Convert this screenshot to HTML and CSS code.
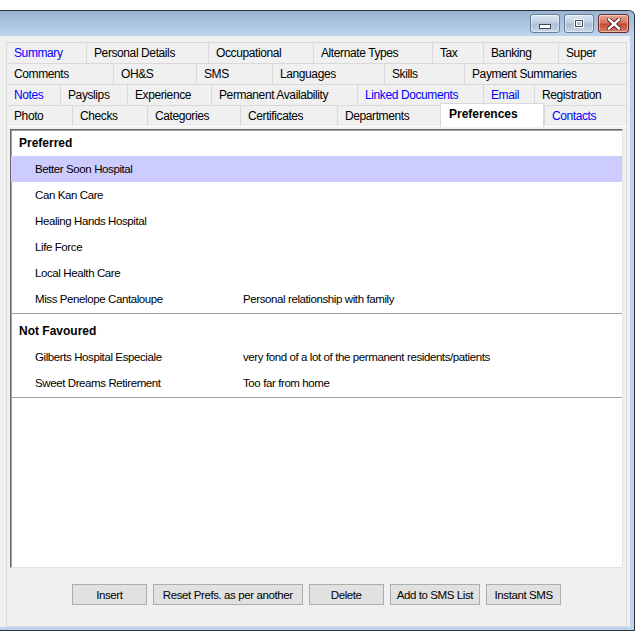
FILE: index.html
```html
<!DOCTYPE html>
<html lang="en">
<head>
  <meta charset="UTF-8" />
  <title>Preferences</title>
  <link rel="stylesheet" href="styles.css">
</head>
<body>
  <div class="window">
    <div class="titlebar">
      <button class="cap-btn" title="Minimize"><span class="ico-min"></span></button>
      <button class="cap-btn" title="Restore"><span class="ico-restore"></span></button>
      <button class="cap-btn close" title="Close">
        <svg width="14" height="12" viewBox="0 0 14 12">
          <path d="M2 1.5 L12 10.5 M12 1.5 L2 10.5" stroke="#4a1a14" stroke-width="4.2" stroke-linecap="square" fill="none"/>
          <path d="M2 1.5 L12 10.5 M12 1.5 L2 10.5" stroke="#fff" stroke-width="2.4" stroke-linecap="square" fill="none"/>
        </svg>
      </button>
    </div>

    <div class="client">
      <div class="tabs">
        <div class="tab-row row-1">
          <div class="tab link">Summary</div>
          <div class="tab">Personal Details</div>
          <div class="tab">Occupational</div>
          <div class="tab">Alternate Types</div>
          <div class="tab">Tax</div>
          <div class="tab">Banking</div>
          <div class="tab">Super</div>
        </div>
        <div class="tab-row row-2">
          <div class="tab">Comments</div>
          <div class="tab">OH&amp;S</div>
          <div class="tab">SMS</div>
          <div class="tab">Languages</div>
          <div class="tab">Skills</div>
          <div class="tab">Payment Summaries</div>
        </div>
        <div class="tab-row row-3">
          <div class="tab link">Notes</div>
          <div class="tab">Payslips</div>
          <div class="tab">Experience</div>
          <div class="tab">Permanent Availability</div>
          <div class="tab link">Linked Documents</div>
          <div class="tab link">Email</div>
          <div class="tab">Registration</div>
        </div>
        <div class="tab-row row-4">
          <div class="tab">Photo</div>
          <div class="tab">Checks</div>
          <div class="tab">Categories</div>
          <div class="tab">Certificates</div>
          <div class="tab">Departments</div>
          <div class="tab active">Preferences</div>
          <div class="tab link">Contacts</div>
        </div>
      </div>

      <div class="page">
        <div class="list">
          <div class="section">
            <div class="group">Preferred</div>
            <div class="item selected"><span class="name">Better Soon Hospital</span><span class="note"></span></div>
            <div class="item"><span class="name">Can Kan Care</span><span class="note"></span></div>
            <div class="item"><span class="name">Healing Hands Hospital</span><span class="note"></span></div>
            <div class="item"><span class="name">Life Force</span><span class="note"></span></div>
            <div class="item"><span class="name">Local Health Care</span><span class="note"></span></div>
            <div class="item"><span class="name">Miss Penelope Cantaloupe</span><span class="note">Personal relationship with family</span></div>
          </div>
          <div class="section">
            <div class="group">Not Favoured</div>
            <div class="item"><span class="name">Gilberts Hospital Especiale</span><span class="note">very fond of a lot of the permanent residents/patients</span></div>
            <div class="item"><span class="name">Sweet Dreams Retirement</span><span class="note">Too far from home</span></div>
          </div>
        </div>

        <div class="actions">
          <button class="btn">Insert</button>
          <button class="btn wide">Reset Prefs. as per another</button>
          <button class="btn">Delete</button>
          <button class="btn">Add to SMS List</button>
          <button class="btn">Instant SMS</button>
        </div>
      </div>
    </div>
  </div>
</body>
</html>
```

FILE: styles.css
```css
html, body {
  margin: 0;
  padding: 0;
  background: #fff;
  font-family: 'Liberation Sans', Arial, sans-serif;
  font-size: 12px;
  color: #000;
}
.window {
  margin-top: 10px;
  width: 634px;
  height: 619px;
  border: 1px solid #2e3236;
  border-left: none;
  border-top-right-radius: 6px;
  background: #bcd3eb;
  display: flex;
  flex-direction: column;
}
.titlebar {
  height: 25px;
  flex: none;
  display: flex;
  justify-content: flex-end;
  align-items: flex-start;
  gap: 4px;
  padding: 3px 5px 0 0;
  box-sizing: border-box;
  background: linear-gradient(#98b4d3, #bdd4ec);
  border-top-right-radius: 6px;
}
.cap-btn {
  width: 30px;
  height: 19px;
  padding: 0;
  border: 1px solid #6b7d96;
  border-radius: 3px;
  background: linear-gradient(#dde7f3, #bccde2 48%, #a9bdd7 52%, #c9d8ea);
  box-shadow: inset 0 0 0 1px rgba(255, 255, 255, 0.45);
  display: flex;
  align-items: center;
  justify-content: center;
}
.cap-btn.close {
  width: 31px;
  border-color: #6b2a22;
  background: linear-gradient(#e6a596, #d2735f 48%, #c24a34 52%, #d6806b);
}
.ico-min {
  width: 10px;
  height: 3px;
  margin-top: 6px;
  background: #fff;
  border: 1px solid #3d4a5c;
}
.ico-restore {
  width: 6px;
  height: 5px;
  border: 1px solid #3d4a5c;
  box-shadow: inset 0 0 0 1px #fff, 0 0 0 1px #fff;
}
.client {
  flex: 1;
  margin: 0 4px 3px 0;
  background: #f0f0f0;
  padding: 6px 0 0 6px;
  display: flex;
  flex-direction: column;
}
.tabs {
  width: 621px;
}
.tab-row {
  display: flex;
  height: 21px;
}
.tab {
  flex: none;
  box-sizing: border-box;
  padding-left: 7px;
  line-height: 20px;
  white-space: nowrap;
  overflow: hidden;
  letter-spacing: -0.4px;
  border-top: 1px solid #d9d9d9;
  border-left: 1px solid #d9d9d9;
  background: #f0f0f0;
}
.tab:last-child {
  border-right: 1px solid #d9d9d9;
}
.tab.link {
  color: #0000ff;
}

/* tab widths, as the tab control lays them out */
.row-1 .tab:nth-child(1) { width: 80px; }
.row-1 .tab:nth-child(2) { width: 122px; }
.row-1 .tab:nth-child(3) { width: 105px; }
.row-1 .tab:nth-child(4) { width: 119px; }
.row-1 .tab:nth-child(5) { width: 51px; }
.row-1 .tab:nth-child(6) { width: 75px; }
.row-1 .tab:nth-child(7) { width: 69px; }
.row-2 .tab:nth-child(1) { width: 107px; }
.row-2 .tab:nth-child(2) { width: 83px; }
.row-2 .tab:nth-child(3) { width: 76px; }
.row-2 .tab:nth-child(4) { width: 112px; }
.row-2 .tab:nth-child(5) { width: 80px; }
.row-2 .tab:nth-child(6) { width: 163px; }
.row-3 .tab:nth-child(1) { width: 54px; }
.row-3 .tab:nth-child(2) { width: 67px; }
.row-3 .tab:nth-child(3) { width: 84px; }
.row-3 .tab:nth-child(4) { width: 146px; }
.row-3 .tab:nth-child(5) { width: 126px; }
.row-3 .tab:nth-child(6) { width: 51px; }
.row-3 .tab:nth-child(7) { width: 93px; }
.row-4 .tab:nth-child(1) { width: 66px; }
.row-4 .tab:nth-child(2) { width: 75px; }
.row-4 .tab:nth-child(3) { width: 93px; }
.row-4 .tab:nth-child(4) { width: 97px; }
.row-4 .tab:nth-child(5) { width: 103px; }
.row-4 .tab:nth-child(6) { width: 104px; }
.row-4 .tab:nth-child(7) { width: 83px; }

.tab.active {
  background: #fff;
  font-weight: bold;
  letter-spacing: 0;
  padding-left: 8px;
  margin-top: -2px;
  height: 24px;
  line-height: 20px;
  border-bottom: none;
  position: relative;
  z-index: 1;
  border-right: 1px solid #d9d9d9;
}
.page {
  width: 621px;
  flex: 1;
  box-sizing: border-box;
  border: 1px solid #d9d9d9;
  border-top-color: #fff;
  padding: 2px 3px 0 3px;
  display: flex;
  flex-direction: column;
}
.list {
  height: 439px;
  box-sizing: border-box;
  background: #fff;
  border: 1px solid;
  border-color: #696969 #e3e3e3 #e3e3e3 #696969;
  box-shadow: inset 1px 1px 0 #a0a0a0;
}
.section {
  padding-bottom: 1px;
  border-bottom: 1px solid #a0a0a0;
}
.section + .section {
  padding-top: 4px;
}
.group {
  height: 26px;
  line-height: 26px;
  padding-left: 8px;
  font-weight: bold;
}
.item {
  display: flex;
  height: 26px;
  line-height: 26px;
  padding-left: 24px;
  font-size: 11.5px;
  letter-spacing: -0.4px;
}
.item.selected {
  background: #ccccff;
}
.name {
  width: 208px;
  flex: none;
}
.actions {
  display: flex;
  justify-content: center;
  gap: 6px;
  padding-top: 16px;
}
.btn {
  min-width: 75px;
  height: 21px;
  padding: 0 6px;
  border: 1px solid #adadad;
  background: #e1e1e1;
  font-family: inherit;
  font-size: 11.5px;
  letter-spacing: -0.4px;
  color: #000;
}
.btn.wide {
  padding: 0 9px;
}
```
